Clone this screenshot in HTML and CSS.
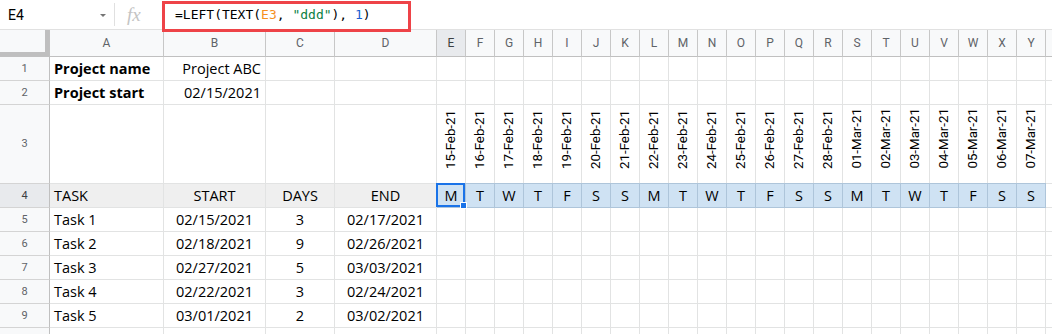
FILE: index.html
```html
<!DOCTYPE html>
<html lang="en">
<head>
  <meta charset="UTF-8" />
  <title>Gantt chart - weekday letters</title>
  <link rel="stylesheet" href="styles.css">
</head>
<body>

<div class="formula-bar">
  <div class="name-box">E4<span class="caret"></span></div>
  <div class="sep"></div>
  <div class="fx">fx</div>
  <div class="formula">=LEFT(TEXT(<span class="ref">E3</span>, <span class="str">"ddd"</span>), <span class="num">1</span>)</div>
  <div class="callout"></div>
</div>

<div class="sheet" id="sheet"></div>

<script>
  const letters = "ABCDEFGHIJKLMNOPQRSTUVWXY".split("");
  const dates = [
    "15-Feb-21", "16-Feb-21", "17-Feb-21", "18-Feb-21", "19-Feb-21", "20-Feb-21", "21-Feb-21",
    "22-Feb-21", "23-Feb-21", "24-Feb-21", "25-Feb-21", "26-Feb-21", "27-Feb-21", "28-Feb-21",
    "01-Mar-21", "02-Mar-21", "03-Mar-21", "04-Mar-21", "05-Mar-21", "06-Mar-21", "07-Mar-21"
  ];
  const days = "MTWTFSSMTWTFSSMTWTFSS".split("");
  const tasks = [
    ["Task 1", "02/15/2021", 3, "02/17/2021"],
    ["Task 2", "02/18/2021", 9, "02/26/2021"],
    ["Task 3", "02/27/2021", 5, "03/03/2021"],
    ["Task 4", "02/22/2021", 3, "02/24/2021"],
    ["Task 5", "03/01/2021", 2, "03/02/2021"]
  ];

  const sheet = document.getElementById("sheet");

  function cell(cls, text) {
    const d = document.createElement("div");
    d.className = "cell " + cls;
    if (text !== undefined && text !== "") d.innerHTML = text;
    sheet.appendChild(d);
  }

  // cells A..Y for one row, as [text, class]
  function rowCells(r) {
    const out = letters.map(() => ["", ""]);
    if (r === 1) {
      out[0] = ["Project name", "bold"];
      out[1] = ["Project ABC", "right"];
    }
    if (r === 2) {
      out[0] = ["Project start", "bold"];
      out[1] = ["02/15/2021", "right"];
    }
    if (r === 3) {
      dates.forEach((d, i) => out[i + 4] = [`<span>${d}</span>`, "date"]);
    }
    if (r === 4) {
      out[0] = ["TASK", "gray"];
      out[1] = ["START", "gray center"];
      out[2] = ["DAYS", "gray center"];
      out[3] = ["END", "gray center"];
      days.forEach((d, i) => out[i + 4] = [d, "blue center"]);
      out[4][1] += " selected";
    }
    if (r >= 5 && r <= 9) {
      const t = tasks[r - 5];
      out[0] = [t[0], ""];
      out[1] = [t[1], "center"];
      out[2] = [t[2], "center"];
      out[3] = [t[3], "center"];
    }
    return out;
  }

  cell("corner");
  letters.forEach(l => cell("col-head" + (l === "E" ? " active" : ""), l));
  cell("col-head edge");

  // row 10 only peeks in at the bottom edge, its number is below the fold
  for (let r = 1; r <= 10; r++) {
    cell("row-head" + (r === 4 ? " active" : ""), r < 10 ? r : "");
    rowCells(r).forEach(c => cell(c[1], c[0]));
    cell("edge");
  }
</script>

</body>
</html>
```

FILE: styles.css
```css
body {
  margin: 0;
  background: #fff;
  font-family: "Open Sans", Arial, sans-serif;
  color: #000;
  overflow: hidden;
}

/* formula bar */
.formula-bar {
  position: relative;
  display: flex;
  align-items: center;
  height: 29px;
  border-bottom: 1px solid #e1e1e1;
}

.name-box {
  display: flex;
  align-items: center;
  justify-content: space-between;
  width: 114px;
  height: 100%;
  box-sizing: border-box;
  padding: 0 8px 0 8px;
  font: 14px Roboto, Arial, sans-serif;
  color: #000;
}

.caret {
  width: 0;
  height: 0;
  margin-top: 1px;
  border-left: 3px solid transparent;
  border-right: 3px solid transparent;
  border-top: 3px solid #757575;
}

.sep {
  width: 1px;
  height: 23px;
  background: #e0e0e0;
}

.fx {
  width: 60px;
  box-sizing: border-box;
  padding-left: 12px;
  font: italic 19px "Liberation Serif", serif;
  color: #c4c4c4;
}

.formula {
  font: 13px "DejaVu Sans Mono", monospace;
  color: #000;
  white-space: pre;
}

.formula .ref { color: #f6911e; }
.formula .str { color: #0b8043; }
.formula .num { color: #1a5fd0; }

.callout {
  position: absolute;
  left: 162px;
  top: 1px;
  width: 249px;
  height: 31px;
  box-sizing: border-box;
  border: 3px solid #ee4348;
  z-index: 3;
}

/* grid */
.sheet {
  display: grid;
  grid-template-columns: 50px 114px 102px 69px 102px repeat(21, 29px) 1fr;
  grid-template-rows: 27px 24px 24px 79px repeat(7, 24px);
  height: 304px;
  overflow: hidden;
}

.cell {
  display: flex;
  align-items: flex-end;
  box-sizing: border-box;
  min-width: 0;
  padding: 0 4px 1px 4px;
  border-right: 1px solid #e2e3e3;
  border-bottom: 1px solid #e2e3e3;
  font-size: 14.5px;
  line-height: 20px;
  white-space: nowrap;
  overflow: hidden;
}

.corner {
  background: #f8f9fa;
  border-right-color: #c0c0c0;
  border-bottom-color: #c0c0c0;
  box-shadow: inset -4px -4px 0 #bfbfbf;
}

.col-head,
.row-head {
  align-items: center;
  justify-content: center;
  padding: 0;
  background: #f8f9fa;
  font-family: Roboto, Arial, sans-serif;
  color: #5f6368;
}

.col-head {
  font-size: 12px;
  border-right-color: #c7c7c7;
  border-bottom-color: #c0c0c0;
}

.row-head {
  font-size: 11px;
  border-right-color: #c0c0c0;
  border-bottom-color: #d4d4d4;
}

.col-head.active,
.row-head.active {
  background: #e8eaed;
  color: #3c4043;
}

.col-head.edge {
  border-right: none;
}

.edge {
  border-right: none;
}

.bold { font-weight: 700; }
.right { justify-content: flex-end; }
.center { justify-content: center; }

.gray { background: #efefef; }

.blue {
  background: #cfe2f3;
  border-right-color: #aec5da;
  border-bottom-color: #aec5da;
  box-shadow: 0 -1px 0 #aec5da;
}

.date {
  justify-content: center;
  padding: 0 0 14px 0;
}

.date span {
  writing-mode: vertical-rl;
  transform: rotate(180deg);
  font-family: Roboto, Arial, sans-serif;
  font-size: 13.3px;
  line-height: 16px;
  color: #000;
}

.selected {
  position: relative;
  overflow: visible;
  z-index: 2;
}

.selected::before {
  content: "";
  position: absolute;
  top: -1px;
  left: -1px;
  right: 0;
  bottom: 0;
  border: 2px solid #1a73e8;
}

.selected::after {
  content: "";
  position: absolute;
  right: -2px;
  bottom: -2px;
  width: 5px;
  height: 5px;
  background: #1a73e8;
  border: 1px solid #fff;
}
```
